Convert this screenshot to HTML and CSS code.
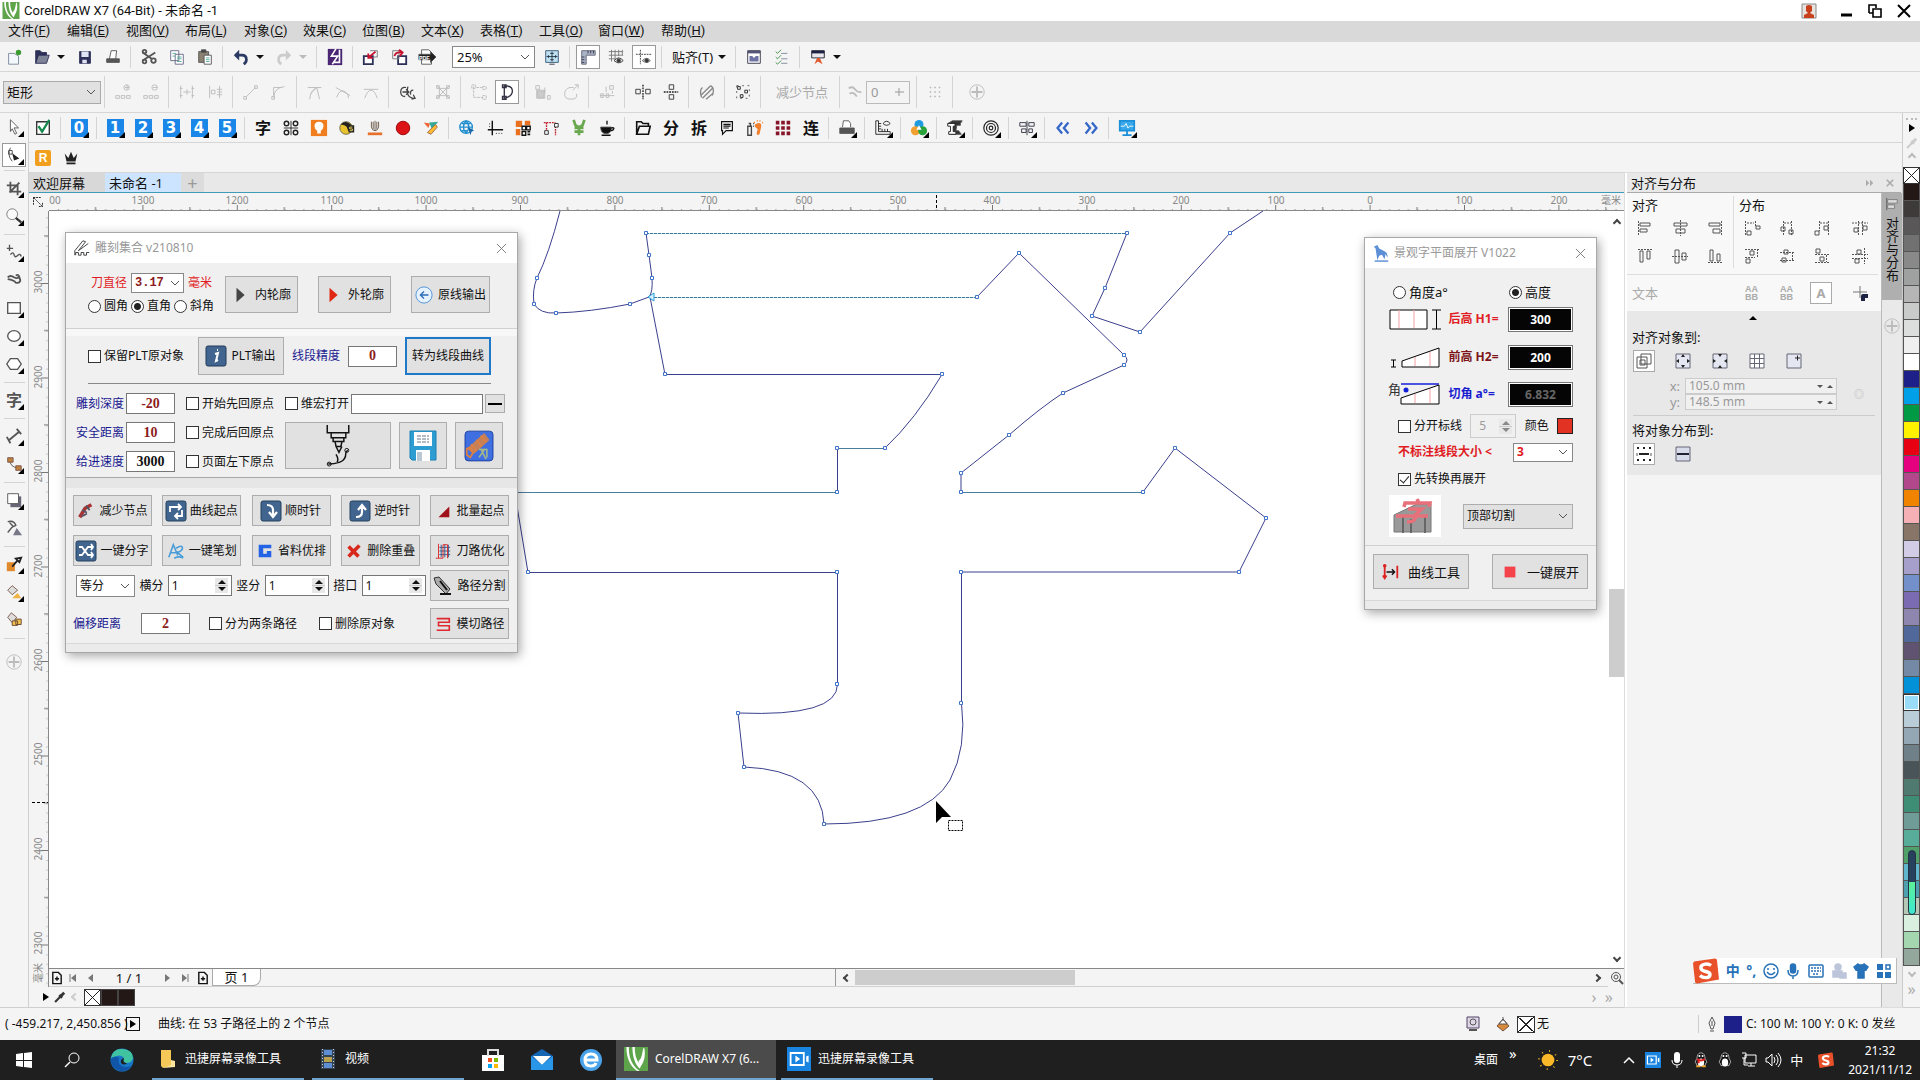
FILE: index.html
```html
<!DOCTYPE html>
<html lang="zh-CN">
<head>
<meta charset="utf-8">
<title>CorelDRAW X7 (64-Bit) - 未命名 -1</title>
<link rel="stylesheet" href="styles.css">
</head>
<body>
<svg class="sprite" aria-hidden="true">
  <symbol id="corel" viewBox="0 0 20 20"><path fill="#5da44a" stroke="none" d="M0 0h20v20H0z"/><path fill="#fff" stroke="none" d="M2 0c0 9 3 16 9 20h2C6 15 4 8 4 0zM7 0c0 8 2 14 6 18 1-1 1-2 1-3C10 11 9 6 9 0zM16 1c-1 5-1 8-4 11l2 4c3-4 4-9 3-15z"/></symbol>
  <symbol id="plus-circle" viewBox="0 0 20 20"><circle cx="10" cy="10" r="8"/><path d="M10 4v12M4 10h12" stroke-width="2"/></symbol>
  <symbol id="sogou" viewBox="0 0 26 26"><path fill="#e8512a" stroke="none" d="M1 4 22 1q2 0 2 2l2 19-22 4q-2 0-2-2L0 6z"/><path d="M18 8c-4-3-11-1-10 3s9 2 9 6-7 4-10 1" stroke="#fff" stroke-width="3.4"/></symbol>
  <symbol id="rec" viewBox="0 0 20 20"><path fill="#1a85e0" stroke="none" d="M0 0h20v20H0z"/><path d="M3 5h11v10H3z" stroke="#fff" stroke-width="1.5"/><path fill="#fff" stroke="none" d="m7 7 4 3-4 3zM16 8l2-1v6l-2-1z"/></symbol>
  <symbol id="dropper" viewBox="0 0 20 20"><path d="m3 17 8-8" stroke-width="3"/><path d="m9 7 4 4m-1-3 4-4" stroke-width="4"/></symbol>
  <symbol id="page-add" viewBox="0 0 20 20"><path d="M4 2h8l4 4v12H4zM7 11h6M10 8v6" stroke="#111" stroke-width="2"/></symbol>
  <symbol id="penguin" viewBox="0 0 20 20"><path fill="#111" stroke="#ccc" d="M10 1c-4 0-5 4-5 7-2 3-3 6-1 6l1 3h10l1-3c2 0 1-3-1-6 0-3-1-7-5-7z"/><ellipse cx="10" cy="13" rx="4" ry="5" fill="#fff" stroke="none"/><circle cx="8" cy="5" r="1.3" fill="#fff" stroke="none"/><circle cx="12" cy="5" r="1.3" fill="#fff" stroke="none"/></symbol>
</svg>

<header class="titlebar">
  <svg class="i20"><use href="#corel"/></svg>
  <h1>CorelDRAW X7 (64-Bit) - 未命名 -1</h1>
  <div class="winctl">
    <button aria-label="用户"><svg viewBox="0 0 16 16" class="i16"><path fill="#e8e2de" stroke="#888" d="M1 1h14v14H1z"/><path fill="#c8401c" stroke="none" d="M5 3q3-2 6 0v5l-2 2 4 2v3H3v-3l4-2-2-2z"/></svg></button>
    <button aria-label="最小化"><svg viewBox="0 0 16 16" class="i16"><path d="M3 12h11" stroke="#000" stroke-width="3"/></svg></button>
    <button aria-label="还原"><svg viewBox="0 0 16 16" class="i16"><path d="M2 10V2h7v3M6 6h8v8H6zM2 10h4" stroke="#000" stroke-width="1.6"/></svg></button>
    <button aria-label="关闭"><svg viewBox="0 0 16 16" class="i16"><path d="m2 2 12 12M14 2 2 14" stroke="#000" stroke-width="2"/></svg></button>
  </div>
</header>

<nav class="menubar">
  <a href="#">文件(<u>F</u>)</a><a href="#">编辑(<u>E</u>)</a><a href="#">视图(<u>V</u>)</a><a href="#">布局(<u>L</u>)</a><a href="#">对象(<u>C</u>)</a><a href="#">效果(<u>C</u>)</a><a href="#">位图(<u>B</u>)</a><a href="#">文本(<u>X</u>)</a><a href="#">表格(<u>T</u>)</a><a href="#">工具(<u>O</u>)</a><a href="#">窗口(<u>W</u>)</a><a href="#">帮助(<u>H</u>)</a>
</nav>

<div class="bar bar-std">
  <button class="tb" aria-label="新建"><svg viewBox="0 0 20 20"><path d="M4 6h6l5 3v9H4z" fill="#f4f8fc" stroke="#789"/><circle cx="15" cy="5" r="3" fill="#3b9c31" stroke="none"/></svg></button>
  <button class="tb" aria-label="打开"><svg viewBox="0 0 20 20"><path d="M3 17V3h5l2 2h5v3" fill="#2c2f57" stroke="#2c2f57"/><path d="m3 17 3-9h12l-3 9z" fill="#7f8396" stroke="#2c2f57"/></svg></button>
  <i class="caret"></i>
  <button class="tb" aria-label="保存"><svg viewBox="0 0 20 20"><path d="M4 4h12v13H4z" fill="#2c2f57" stroke="#2c2f57"/><path d="M6 4h8v6H6zM7 13h5v4H7z" fill="#dfe3f2" stroke="none"/></svg></button>
  <button class="tb" aria-label="打印"><svg viewBox="0 0 20 20"><path d="M6 12 8 3h6l-1 9" fill="#fff"/><path d="M3 12h14v4H3z" fill="#555"/></svg></button>
  <i class="sep"></i>
  <button class="tb" aria-label="剪切"><svg viewBox="0 0 20 20"><path d="m3 5 10 7M3 14 17 5" stroke-width="2"/><circle cx="15" cy="14" r="2.5" stroke-width="2"/><circle cx="5" cy="15" r="2" stroke-width="2"/><circle cx="5" cy="4" r="2" stroke-width="2"/></svg></button>
  <button class="tb" aria-label="复制"><svg viewBox="0 0 20 20"><path d="M3 3h9v11H3zM8 7h9v11H8z" fill="#fff" stroke="#668"/><path d="M5 6h4M5 9h3M10 10h5M10 12h5M10 15h5" stroke="#5a9"/></svg></button>
  <button class="tb" aria-label="粘贴"><svg viewBox="0 0 20 20"><path d="M3 4h11v12H3z" fill="#8a8172" stroke="#555"/><path d="M6 2h5v3H6z" fill="#444"/><path d="M9 8h8v10H9z" fill="#fff"/><path d="M11 11h4M11 13h4M11 15h4" stroke="#5a9"/></svg></button>
  <i class="sep"></i>
  <button class="tb" aria-label="撤消"><svg viewBox="0 0 20 20"><path d="M4 8h7q5 0 5 5 0 3-3 5" stroke="#2c3a63" stroke-width="3"/><path d="m2 8 6-6v12z" fill="#2c3a63" stroke="none"/></svg></button>
  <i class="caret"></i>
  <button class="tb" aria-label="重做"><svg viewBox="0 0 20 20"><path d="M16 8H9q-5 0-5 5 0 3 3 5" stroke="#ccc" stroke-width="3"/><path d="m18 8-6-6v12z" fill="#ccc" stroke="none"/></svg></button>
  <i class="caret dim"></i>
  <i class="sep"></i>
  <button class="tb" aria-label="搜索内容"><svg viewBox="0 0 20 20"><path d="M2 1h16v18H2z" fill="#4b2675" stroke="none"/><path d="M11 1 6 9h7l-6 9M15 2v14H9" stroke="#fff" stroke-width="1.800"/></svg></button>
  <i class="sep"></i>
  <button class="tb" aria-label="导入"><svg viewBox="0 0 20 20"><path d="M2 9h10v9H2z" fill="#fff" stroke="#2c2f57" stroke-width="2"/><path d="M9 3h8v7h-4" stroke="#777"/><path d="M15 4 8 10M7 6v5h5" stroke="#c8102e" stroke-width="2"/></svg></button>
  <button class="tb" aria-label="导出"><svg viewBox="0 0 20 20"><path d="M9 9h9v9H9z" fill="#fff" stroke="#2c2f57" stroke-width="2"/><path d="M3 3h7v9H3z" stroke="#777"/><path d="M5 9q1-5 8-4m-3-3 4 3-3 4" stroke="#c8102e" stroke-width="2"/></svg></button>
  <button class="tb" aria-label="发布为PDF"><svg viewBox="0 0 20 20"><path d="M4 2h8l3 3v13H4z" fill="#fff"/><path d="M1 7h13V4l6 6-6 6v-3H1z" fill="#222"/><text x="1" y="13" class="tiny">PDF</text></svg></button>
  <label class="zoomlevel"><select aria-label="缩放级别"><option>25%</option></select></label>
  <button class="tb" aria-label="全屏预览"><svg viewBox="0 0 20 20"><path d="M3 3h14v13H3z" fill="#bfe0ee" stroke="#357"/><path d="M10 4v11M4 9.500h12M8 6h4M8 13h4M6 8v3M14 8v3M7 18h6" stroke="#234"/></svg></button>
  <i class="sep"></i>
  <button class="tb on" aria-label="显示标尺"><svg viewBox="0 0 20 20"><path d="M3 18V3h15v5H8v10z" fill="#a9b3c6" stroke="#667"/><path d="M10 3v3M13 3v3M16 3v3M3 10h3M3 13h3M3 16h3" stroke="#334"/></svg></button>
  <button class="tb" aria-label="显示网格"><svg viewBox="0 0 20 20"><path d="M2 4h16M2 8h16M2 12h7M5 2v13M9 2v13M13 2v7M17 2v6" stroke="#777"/><path d="M8 14q5-6 10 0-5 5-10 0z" fill="#eee" stroke="#333"/><circle cx="13" cy="14" r="2" fill="#333"/></svg></button>
  <button class="tb on" aria-label="显示辅助线"><svg viewBox="0 0 20 20"><path d="M1 7h18M6 2v16" stroke-dasharray="2 1" stroke="#333"/><path d="M8 14q5-5 9 0-4 4-9 0z" stroke="#666" fill="#ddd"/><circle cx="13" cy="14" r="2" fill="#333"/></svg></button>
  <i class="sep"></i>
  <button class="textbtn">贴齐(T)</button>
  <i class="caret"></i>
  <i class="sep"></i>
  <button class="tb" aria-label="欢迎屏幕"><svg viewBox="0 0 20 20"><path d="M3 3h14v14H3z" fill="#fff" stroke="#334"/><path d="M3 3h14v3H3z" fill="#557" stroke="none"/><path d="M5 9h3l2 2 2-2h3v6H5z" fill="#6d74a5" stroke="none"/></svg></button>
  <button class="tb" aria-label="选项"><svg viewBox="0 0 20 20"><path d="m3 4 2 2 4-4M3 10l2 2 4-4M3 16l2 2 4-4" stroke="#3a8a3a"/><path d="M9 6h7M9 12h7M9 17h7" stroke="#7a8a9a"/></svg></button>
  <i class="sep"></i>
  <button class="tb" aria-label="应用程序启动器"><svg viewBox="0 0 20 20"><path d="M3 3h14v8H3z" fill="#e8e8ee" stroke="#223"/><path d="M3 3h14v3H3z" fill="#1d2144" stroke="none"/><path d="m6 18 3-7h3l3 7-5-3z" fill="#e2572b" stroke="none"/></svg></button>
  <i class="caret"></i>
</div>

<div class="bar bar-prop">
  <label class="shape"><select aria-label="选取范围模式"><option>矩形</option></select></label>
  <i class="sep"></i>
  <button class="tb off" aria-label="添加节点"><svg viewBox="0 0 20 20"><path d="M2 14h4v3H2zM8 14h4v3H8zM14 14h4v3h-4zM12 5h5M14.500 2v5"/><circle cx="14" cy="5" r="3"/></svg></button>
  <button class="tb off" aria-label="删除节点"><svg viewBox="0 0 20 20"><path d="M2 14h4v3H2zM8 14h4v3H8zM14 14h4v3h-4zM12 5h5"/><circle cx="14" cy="5" r="3"/></svg></button>
  <i class="sep"></i>
  <button class="tb off" aria-label="连接节点"><svg viewBox="0 0 20 20"><path d="M3 3v14M16 3v14M6 10h8M10 7v6M2 6h3M2 14h3M15 6h3M15 14h3"/></svg></button>
  <button class="tb off" aria-label="断开曲线"><svg viewBox="0 0 20 20"><path d="M4 3v14M15 3v14M6 8h4v4H6zM13 10h5M12 7h6M12 13h6"/></svg></button>
  <i class="sep"></i>
  <button class="tb off" aria-label="转换为线条"><svg viewBox="0 0 20 20"><path d="M5 15 15 5M2 15h3v3H2zM14 3h3v3h-3z"/></svg></button>
  <button class="tb off" aria-label="转换为曲线"><svg viewBox="0 0 20 20"><path d="M4 16Q5 5 16 4M2 15h3v3H2zM4 15V5h9"/></svg></button>
  <i class="sep"></i>
  <button class="tb off" aria-label="尖突节点"><svg viewBox="0 0 20 20"><path d="M4 18Q5 8 12 5l3 13M2 5h15M12 5 5 12"/></svg></button>
  <button class="tb off" aria-label="平滑节点"><svg viewBox="0 0 20 20"><path d="M2 5l16 9M3 16q3-9 8-7 5 2 5 8"/></svg></button>
  <button class="tb off" aria-label="对称节点"><svg viewBox="0 0 20 20"><path d="M2 7h16M3 17q3-9 7-9t7 9"/></svg></button>
  <i class="sep"></i>
  <button class="tb" aria-label="反转方向"><svg viewBox="0 0 20 20"><path d="M9 5Q3 4 3 10q0 5 5 5M5 10h6M9 7l3 3-3 3M11 4q-3 12 7 13m-1-9q-4 0-3 5m1 5 4-1-2-4" stroke-width="1.4" stroke="#444"/></svg></button>
  <i class="sep"></i>
  <button class="tb off" aria-label="提取子路径"><svg viewBox="0 0 20 20"><path d="M3 3l14 14M17 3 3 17M6 6h8v8H6zM3 3h3v3H3zM14 3h3v3h-3zM3 14h3v3H3zM14 14h3v3h-3z"/></svg></button>
  <i class="sep"></i>
  <button class="tb off" aria-label="延长曲线使之闭合"><svg viewBox="0 0 20 20"><path d="M4 4v12h10M2 2h4v4H2zM14 14h4v4h-4zM14 4h4v3h-4zM7 5h6" stroke-dasharray="3 1"/></svg></button>
  <button class="tb on" aria-label="闭合曲线"><svg viewBox="0 0 20 20"><path d="M7 3q9 0 9 6t-9 8M7 3v14M5 2h4v3H5zM5 15h4v3H5z" stroke="#334" stroke-width="1.500"/></svg></button>
  <i class="sep"></i>
  <button class="tb off" aria-label="延展与缩放节点"><svg viewBox="0 0 20 20"><path d="M3 8h9v9H3zM2 3h4v4H2zM15 14h3v4h-3zM12 5v6"/><path d="M4 9h7v7H4z" fill="#ccc"/></svg></button>
  <button class="tb off" aria-label="旋转与倾斜节点"><svg viewBox="0 0 20 20"><path d="M13 5q-9-1-10 6t7 7 6-6M12 8l6-6m-4 0h4v4"/></svg></button>
  <i class="sep"></i>
  <button class="tb off" aria-label="对齐节点"><svg viewBox="0 0 20 20"><path d="M2 14h16M3 12h3v4H3zM9 12h3v4H9zM13 3h4v4h-4zM9 4v6M16 9v3"/></svg></button>
  <i class="sep"></i>
  <button class="tb" aria-label="水平反射节点"><svg viewBox="0 0 20 20"><path d="M10 2v16" stroke-dasharray="2 1" stroke-width="2"/><path d="M2 7h5v5H2zM13 7h5v5h-5z" stroke="#333"/></svg></button>
  <button class="tb" aria-label="垂直反射节点"><svg viewBox="0 0 20 20"><path d="M2 10h16" stroke-dasharray="2 1" stroke-width="2"/><path d="M8 2h5v5H8zM8 13h5v5H8z" stroke="#333"/></svg></button>
  <i class="sep"></i>
  <button class="tb off" aria-label="弹性模式"><svg viewBox="0 0 20 20"><path d="M3 14 14 3M5 17 17 5M9 18l8-7M5 5q-4 3-1 11M14 3q5 3 2 11" stroke="#888" stroke-width="1.500"/></svg></button>
  <i class="sep"></i>
  <button class="tb" aria-label="选择所有节点"><svg viewBox="0 0 20 20"><path d="M3 3h14v14H3z" stroke-dasharray="2 4" stroke="#555"/><path d="M4 4h3v3H4zM12 8h3v3h-3zM7 13h3v3H7z" stroke="#222"/></svg></button>
  <i class="sep"></i>
  <button class="textbtn dimtext">减少节点</button>
  <i class="sep"></i>
  <span class="tb off narrow"><svg viewBox="0 0 20 20"><path d="M3 6q4-3 7 1t7 3M4 12q4-3 8 3" stroke-width="2"/></svg></span>
  <label class="smooth"><input value="0" aria-label="曲线平滑度" disabled><svg viewBox="0 0 12 12"><path d="M2 6h9M6 2v8"/></svg></label>
  <i class="sep"></i>
  <button class="tb off" aria-label="边框"><svg viewBox="0 0 20 20"><path d="M4 5h12M4 10h12M4 15h12M5 4v12M10 4v12M15 4v12" stroke-dasharray="2 3"/></svg></button>
  <i class="sep"></i>
  <button class="tb wide off" aria-label="自定义"><svg><use href="#plus-circle"/></svg></button>
</div>

<div class="workspace">
  <aside class="toolbox">
    <button class="tb fly" aria-label="选择"><svg viewBox="0 0 20 20"><path d="m6 2 9 9-5 0 3 6-2 1-3-6-2 3z" fill="#fff" stroke="#555"/></svg></button>
    <button class="tb fly on" aria-label="形状"><svg viewBox="0 0 20 20"><path d="M6 2q-4 8 2 15M4 5h4v4H4z" stroke="#444"/><path d="m8 8 8 6-6 2z" fill="#222" stroke="none"/></svg></button>
    <i class="hsep"></i>
    <button class="tb fly" aria-label="裁剪"><svg viewBox="0 0 20 20"><path d="M6 3v11h12M2 7h12v11M5 15 16 4" stroke-width="2"/></svg></button>
    <button class="tb fly" aria-label="缩放"><svg viewBox="0 0 20 20"><circle cx="8" cy="8" r="6" fill="#fafafa" stroke="#777"/><path d="m12 12 6 5" stroke="#333" stroke-width="2.500"/></svg></button>
    <i class="hsep"></i>
    <button class="tb fly" aria-label="手绘"><svg viewBox="0 0 20 20"><path d="M2 6h7M5 2v7M6 13q3-4 4 0t4 1 4 1" stroke-width="1.500"/></svg></button>
    <button class="tb" aria-label="艺术笔"><svg viewBox="0 0 20 20"><path d="M3 7q3-3 7 0 3 2 6 0-1-4-4-2M3 9q7 1 9 4 4 1 5-2 0-4-3-5" stroke-width="2"/></svg></button>
    <button class="tb fly" aria-label="矩形"><svg viewBox="0 0 20 20"><path d="M3 4h14v12H3z" fill="#fff" stroke-width="1.500"/></svg></button>
    <button class="tb fly" aria-label="椭圆形"><svg viewBox="0 0 20 20"><ellipse cx="10" cy="10" rx="7" ry="6" fill="#fff" stroke-width="1.500"/></svg></button>
    <button class="tb fly" aria-label="多边形"><svg viewBox="0 0 20 20"><path d="m6 4h8l4 6-4 6H6l-4-6z" fill="#fff" stroke-width="1.500"/></svg></button>
    <i class="hsep"></i>
    <button class="tb fly glyph grey" aria-label="文本">字</button>
    <i class="hsep"></i>
    <button class="tb fly" aria-label="平行度量"><svg viewBox="0 0 20 20"><path d="M4 15 16 5M2 11l4 7M13 2l5 6" stroke-width="2"/></svg></button>
    <button class="tb fly" aria-label="直线连接器"><svg viewBox="0 0 20 20"><path d="M5 5q1 9 9 9"/><path d="M3 3h6v5H3zM12 12h6v5h-6z" fill="#c1803f" stroke="#754"/></svg></button>
    <i class="hsep"></i>
    <button class="tb fly" aria-label="阴影"><svg viewBox="0 0 20 20"><path d="M6 6h12v12H6z" fill="#667" stroke="none"/><path d="M3 3h12v11H3z" fill="#fff"/></svg></button>
    <button class="tb" aria-label="透明度"><svg viewBox="0 0 20 20"><path d="M3 3q7-2 9 4l-4 2-5 6M5 4l4 4" stroke-width="1.500"/><path d="m9 18 4-8 6 8z" fill="#778" stroke="none"/></svg></button>
    <i class="hsep"></i>
    <button class="tb fly" aria-label="颜色滴管"><svg viewBox="0 0 20 20"><path d="M2 8h9v10H2z" fill="#e08a2c" stroke="none"/><path d="m8 13 6-7M12 4l4 4 2-5z" stroke="#222" stroke-width="2"/></svg></button>
    <button class="tb fly" aria-label="交互式填充"><svg viewBox="0 0 20 20"><path d="m8 3 6 5-6 5-5-5z" fill="#ddd" stroke="#754"/><path d="m8 17 6-6 4 6z" fill="#f0b343" stroke="none"/></svg></button>
    <button class="tb" aria-label="智能填充"><svg viewBox="0 0 20 20"><path d="m7 2 6 5-5 6-5-6z" fill="#ddd" stroke="#754"/><path d="M8 11h6v5H8zM12 9h6v6h-6z" fill="#f3c14d" stroke="#643"/></svg></button>
    <i class="hsep"></i>
    <button class="tb grow off" aria-label="自定义工具箱"><svg><use href="#plus-circle"/></svg></button>
  </aside>

  <div class="center">
    <div class="bar bar-plug">
      <button class="tb" aria-label="确认"><svg viewBox="0 0 20 20"><path d="M3 3h14v14H3z" fill="#fff" stroke="#333" stroke-width="1.500"/><path d="m5 8 4 6 8-13" stroke="#12884c" stroke-width="2.500"/></svg></button>
      <i class="sep"></i>
      <button class="tb fly num"><b>0</b></button><i class="sep"></i>
      <button class="tb fly num"><b>1</b></button><button class="tb fly num"><b>2</b></button><button class="tb fly num"><b>3</b></button><button class="tb fly num"><b>4</b></button><button class="tb fly num"><b>5</b></button>
      <i class="sep"></i>
      <button class="tb glyph">字</button>
      <button class="tb" aria-label="阵列"><svg viewBox="0 0 20 20"><path d="M10 2v16M2 10h16" stroke="#222"/><g stroke="#222" stroke-width="1.600"><circle cx="5" cy="5" r="2.500"/><circle cx="15" cy="5" r="2.500"/><circle cx="5" cy="15" r="2.500"/><circle cx="15" cy="15" r="2.500"/></g></svg></button>
      <button class="tb" aria-label="灯泡"><svg viewBox="0 0 20 20"><path d="M1 1h18v18H1z" fill="#f07d1e" stroke="none"/><path d="M10 3q5 0 5 5 0 3-3 5v3H8v-3q-3-2-3-5 0-5 5-5z" fill="#fff" stroke="none"/></svg></button>
      <button class="tb" aria-label="描图"><svg viewBox="0 0 20 20"><circle cx="9" cy="10" r="7" fill="#e9c32e" stroke="#665"/><path d="M3 6q6-6 12 1l-3 3-5-3z" fill="#222" stroke="none"/><path d="M9 7h9v8h-6z" fill="#222" stroke="none"/><path d="M16 9h-3v2h3v2h-3" stroke="#f0d860"/></svg></button>
      <button class="tb" aria-label="灯箱"><svg viewBox="0 0 20 20"><path d="M6 3v6q1 4 4 4t4-4V3M10 2v11M8 3v8M12 3v8" stroke="#654"/><path d="M2 15h16v3H2z" fill="#e8712a" stroke="none"/></svg></button>
      <button class="tb" aria-label="红印"><svg viewBox="0 0 20 20"><circle cx="10" cy="10" r="7.500" fill="#dc1418" stroke="#900"/></svg></button>
      <button class="tb" aria-label="彩带"><svg viewBox="0 0 20 20"><path d="m2 4 7 1-2 5z" fill="#e63" stroke="none"/><path d="m8 4 10-1-7 8z" fill="#3a9" stroke="none"/><path d="m6 15 9-9 2 3-7 8z" fill="#fb3" stroke="#964"/></svg></button>
      <i class="sep"></i>
      <button class="tb" aria-label="网页"><svg viewBox="0 0 20 20"><g stroke="#1f8fd0" stroke-width="1.500"><circle cx="9" cy="9" r="7"/><path d="M2 9h14M9 2q-6 7 0 14M9 2q6 7 0 14M4 5h10M4 13h7"/></g><path d="m11 9 7 4-3 1-1 4z" fill="#1768a8" stroke="none"/></svg></button>
      <button class="tb" aria-label="原点"><svg viewBox="0 0 20 20"><path d="M7 2v16M2 12h17" stroke="#111" stroke-width="1.600"/><path d="M11 16h7M4 5v4" stroke-dasharray="1 2" stroke="#111"/></svg></button>
      <button class="tb" aria-label="二维码"><svg viewBox="0 0 20 20"><path d="M2 2h7v7H2zM2 11h5v7H2zM12 2h6v5h-6z" fill="#e8701e" stroke="none"/><path d="M9 8h4v4H9zM14 8h4v4h-4zM9 14h4v4H9z" fill="#fff" stroke="#111" stroke-width="1.500"/><path d="M15 14h3M15 17h3" stroke="#111" stroke-width="2"/></svg></button>
      <button class="tb" aria-label="矩形标注"><svg viewBox="0 0 20 20"><path d="M2 4h13M5 4v8M15 8v10" stroke="#c0202c" stroke-width="1.500" stroke-dasharray="2 1"/><path d="M3 13h4v4H3zM14 5h4v4h-4z" fill="#fff" stroke="#222"/></svg></button>
      <button class="tb" aria-label="报价"><svg viewBox="0 0 20 20"><path d="m4 1 2 6 4 2 4-2 2-6M5 10h10M5 14h10M10 8v10" stroke="#6aa84f" stroke-width="3"/></svg></button>
      <button class="tb" aria-label="休息"><svg viewBox="0 0 20 20"><path d="M3 9h12q0 6-4 7H7Q3 15 3 9z" fill="#111"/><path d="M15 10q4-1 2 2-1 1-3 1M10 2v4M4 18h10" stroke="#111" stroke-width="1.500"/></svg></button>
      <i class="sep"></i>
      <button class="tb" aria-label="文件夹"><svg viewBox="0 0 20 20"><path d="M3 17V3h5l2 2h6v3M3 17l3-9h12l-2 9z" stroke="#111" stroke-width="1.800"/></svg></button>
      <button class="tb glyph">分</button><button class="tb glyph">拆</button>
      <button class="tb" aria-label="备注"><svg viewBox="0 0 20 20"><path d="M4 3h12v10H9l-4 4v-4H4zM6 6h8M6 8h8M6 10h6" stroke="#111" stroke-width="1.300"/></svg></button>
      <button class="tb" aria-label="喷涂"><svg viewBox="0 0 20 20"><path d="M2 8h4v10H2zM3 5h2v3M8 5h1M8 8h1" stroke="#444" stroke-width="1.500"/><path d="M10 6q7-4 7 2l-2 9q-4 2-3-2l1-4q-4-2-3-5z" fill="#f0802c" stroke="none"/><path d="M9 4h1M12 2h1M15 2h1M18 4h1" stroke="#f0802c" stroke-width="2"/></svg></button>
      <button class="tb" aria-label="点阵"><svg viewBox="0 0 20 20"><path d="M2 4h16M2 10h16M2 16h16" stroke="#861528" stroke-width="4" stroke-dasharray="4 2"/></svg></button>
      <button class="tb glyph">连</button>
      <i class="sep"></i>
      <button class="tb fly" aria-label="打印工具"><svg viewBox="0 0 20 20"><path d="M5 9 6 2h6l2 3v4" fill="#fff"/><path d="M2 10h16v6H2z" fill="#555"/></svg></button><i class="sep"></i>
      <button class="tb fly" aria-label="标尺工具"><svg viewBox="0 0 20 20"><path d="M2 2h3v12h13v3H2zM5 5h3M5 8h3M5 11h3M9 14v-3M12 14v-3M15 14v-3M10 5q4-5 8 0-4 4-8 0z" stroke="#222"/></svg></button><i class="sep"></i>
      <button class="tb fly" aria-label="颜色工具"><svg viewBox="0 0 20 20"><circle cx="10" cy="6" r="5" fill="#1f9be0" stroke="none"/><circle cx="6" cy="13" r="5" fill="#f0a030" stroke="none"/><circle cx="14" cy="13" r="5" fill="#2aa23c" stroke="none"/><path d="m10 7 3 5h-6z" fill="#fff" stroke="none"/></svg></button><i class="sep"></i>
      <button class="tb fly" aria-label="立体工具"><svg viewBox="0 0 20 20"><path d="m2 5 5-3h11l-2 3v2h-4l-1 6h3l3 4H4l2-3V7H2z" fill="#333"/><path d="M2 5h8v3H8v6h3v3H3v-3h2V8H2z" fill="#fff" stroke="#222"/></svg></button><i class="sep"></i>
      <button class="tb fly" aria-label="螺纹工具"><svg viewBox="0 0 20 20"><g stroke="#222" stroke-width="1.300"><circle cx="10" cy="10" r="8"/><circle cx="10" cy="10" r="5"/><circle cx="10" cy="10" r="2"/></g></svg></button><i class="sep"></i>
      <button class="tb fly" aria-label="对齐工具"><svg viewBox="0 0 20 20"><path d="M2 4h7v4H2zM12 4h6v4h-6zM4 11h5v4H4zM12 11h4v4h-4zM10 2v16" stroke="#334"/></svg></button><i class="sep"></i>
      <button class="tb" aria-label="上一组"><svg viewBox="0 0 20 20"><path d="m9 4-5 6 5 6M16 4l-5 6 5 6" stroke="#3568c8" stroke-width="2.600"/></svg></button>
      <button class="tb" aria-label="下一组"><svg viewBox="0 0 20 20"><path d="m4 4 5 6-5 6M11 4l5 6-5 6" stroke="#3568c8" stroke-width="2.600"/></svg></button>
      <i class="sep"></i>
      <button class="tb fly" aria-label="监视"><svg viewBox="0 0 20 20"><path d="M2 2h16v11H2zM10 13v4M5 18h10" fill="#39a9ec" stroke="#1b8fd8" stroke-width="2"/><path d="M3 8h4l2-3 2 5 2-2h4" stroke="#fff"/></svg></button>
    </div>
    <div class="bar bar-plug">
      <button class="tb" aria-label="注册"><span class="rbadge">R</span></button>
      <button class="tb" aria-label="会员"><svg viewBox="0 0 20 20"><path d="m3 5 4 5 3-7 3 7 4-5-2 9H5z" fill="#222" stroke="none"/><path d="M5 16h10" stroke="#222" stroke-width="2"/></svg></button>
    </div>

    <div class="split">
      <main class="doc">
        <div class="tabs"><button>欢迎屏幕</button><button class="cur">未命名 -1</button><button class="add" aria-label="新建标签">+</button></div>
        <div class="corner"><svg viewBox="0 0 20 20"><path d="M5 5h9M5 5v9M5 5l10 10m0-4v4h-4" stroke="#111" stroke-dasharray="2 1"/></svg></div>
        <svg class="hruler">
          <defs>
            <pattern id="ht" x="-1" width="94.4" height="18" patternUnits="userSpaceOnUse"><path d="M.5 12v6M47.500 14v4" stroke="#777"/><path d="M10 16.500h80" stroke="#999" stroke-dasharray="1 8.440"/></pattern>
          </defs>
          <rect width="100%" height="18" fill="url(#ht)" stroke="none"/>
          <g class="rl"><text x="6" y="11">00</text><text x="94" y="11">1300</text><text x="188" y="11">1200</text><text x="283" y="11">1100</text><text x="377" y="11">1000</text><text x="471" y="11">900</text><text x="566" y="11">800</text><text x="660" y="11">700</text><text x="755" y="11">600</text><text x="849" y="11">500</text><text x="943" y="11">400</text><text x="1038" y="11">300</text><text x="1132" y="11">200</text><text x="1227" y="11">100</text><text x="1321" y="11">0</text><text x="1415" y="11">100</text><text x="1510" y="11">200</text><text x="1562" y="11">毫米</text></g>
          <path d="M887.500 2v15" stroke="#000" stroke-dasharray="3 2"/>
        </svg>
        <svg class="vruler">
          <defs>
            <pattern id="vt" y="72" width="20" height="94.5" patternUnits="userSpaceOnUse"><path d="M12 .5h8M15 47.500h5" stroke="#777"/><path d="M18 10v80" stroke="#999" stroke-dasharray="1 8.450"/></pattern>
          </defs>
          <rect width="20" height="100%" fill="url(#vt)" stroke="none"/>
          <g class="rl"><text transform="translate(13 71) rotate(-90)">3000</text><text transform="translate(13 166) rotate(-90)">2900</text><text transform="translate(13 260) rotate(-90)">2800</text><text transform="translate(13 355) rotate(-90)">2700</text><text transform="translate(13 449) rotate(-90)">2600</text><text transform="translate(13 543) rotate(-90)">2500</text><text transform="translate(13 638) rotate(-90)">2400</text><text transform="translate(13 732) rotate(-90)">2300</text><text transform="translate(13 762) rotate(-90)">毫米</text></g>
          <path d="M3 591.500h16" stroke="#000" stroke-dasharray="3 2"/>
        </svg>

        <div class="canvas">
          <svg class="drawing">
            <g transform="translate(-49 -211)">
              <g stroke="#3c3f8c">
                <path d="M560 211Q549 254 537 278 532 290 534 304 540 314 556 313 590 312 630 304L649 297Q653 292 652 278L649 255 646 233M1127 233 1105 288 1092 316 1140 332 1230 233 1263 211"/>
                <path d="M977 297 1019 253 1124 355Q1130 360 1124 365L1063 393Q1040 408 1009 435L961 473V492M1143 492 1175 448 1266 518 1239 572H961.500V703Q967 748 950 780 925 824 824 824 822 770 744 767L738 713Q838 717 837.500 684V572.500H528L517 506M837.500 492V448M885 448Q915 420 942 374.500H665L650 297"/>
              </g>
              <path d="M517 492.500H837M837 448.500h48M961 492.500h182" stroke="#4a7f9c"/>
              <path d="M646 233.500h481M650 297.500h327" stroke="#b7dfe6"/>
              <path d="M646 233.500h481M650 297.500h327" stroke="#3a7895" stroke-dasharray="3 1"/>
              <path d="m648 297 6-4v8z" fill="#d3f0ff" stroke="#2a9ad8"/>
              <path class="nodes" d="M535.500 276.500h3v3h-3zM532.500 302.500h3v3h-3zM554.500 311.500h3v3h-3zM628.500 302.500h3v3h-3zM650.500 276.500h3v3h-3zM647.500 253.500h3v3h-3zM644.500 231.500h3v3h-3zM1125.500 231.500h3v3h-3zM1103.500 286.500h3v3h-3zM1090.500 314.500h3v3h-3zM1138.500 330.500h3v3h-3zM1228.500 231.500h3v3h-3zM975.500 295.500h3v3h-3zM1017.500 251.500h3v3h-3zM1122.500 353.500h3v3h-3zM1122.500 363.500h3v3h-3zM1061.500 391.500h3v3h-3zM1007.500 433.500h3v3h-3zM959.500 471.500h3v3h-3zM959.500 490.500h3v3h-3zM1141.500 490.500h3v3h-3zM1173.500 446.500h3v3h-3zM1264.500 516.500h3v3h-3zM1237.500 570.500h3v3h-3zM959.500 570.500h3v3h-3zM959.500 701.500h3v3h-3zM822.500 822.500h3v3h-3zM742.500 765.500h3v3h-3zM736.500 711.500h3v3h-3zM835.500 682.500h3v3h-3zM835.500 570.500h3v3h-3zM526.500 570.500h3v3h-3zM835.500 490.500h3v3h-3zM835.500 446.500h3v3h-3zM883.500 446.500h3v3h-3zM940.500 372.500h3v3h-3zM663.500 372.500h3v3h-3z"/>
              <path d="m936 801 15 16H942l-6 6z" fill="#000" stroke="none"/>
              <path d="M948.500 820.500h14v10h-14z" stroke="#000" stroke-dasharray="2 1"/>
            </g>
          </svg>

          <form class="dlg carve">
            <div class="dlg-title"><svg viewBox="0 0 20 20" class="i18"><path d="M2 18v-5l9-11 3 1-8 10M6 13l11-8M3 18v-3h3v3h3v-3h3v3h3v-3h3" stroke="#333"/></svg><span>雕刻集合 v210810</span><button type="button" aria-label="关闭"><svg viewBox="0 0 12 12"><path d="m1 1 10 10M11 1 1 11" stroke="#777"/></svg></button></div>
            <div class="sec s1">
              <div class="kn">
                <div class="r"><label for="dia" class="red">刀直径</label><select id="dia" class="mono"><option>3.17</option></select><span class="red">毫米</span></div>
                <div class="r radios"><label><input type="radio" name="cr">圆角</label><label><input type="radio" name="cr" checked>直角</label><label><input type="radio" name="cr">斜角</label></div>
              </div>
              <button type="button" class="b w73"><svg viewBox="0 0 20 20" class="i18"><path d="m5 2 9 8-9 8z" fill="#444" stroke="none"/></svg>内轮廓</button>
              <button type="button" class="b w73"><svg viewBox="0 0 20 20" class="i18"><path d="m5 2 9 8-9 8z" fill="#e02814" stroke="none"/></svg>外轮廓</button>
              <button type="button" class="b w79"><svg viewBox="0 0 20 20" class="i18"><circle cx="10" cy="10" r="9" fill="#e6f3ff" stroke="#4b8fd6"/><path d="M15 10H6m4-4-4 4 4 4" stroke="#2d6eb8" stroke-width="1.500"/></svg>原线输出</button>
            </div>
            <div class="sec s2">
              <div class="r plt">
                <label class="ck"><input type="checkbox">保留PLT原对象</label>
                <button type="button" class="b w86"><svg viewBox="0 0 20 20" class="i20"><rect width="20" height="20" rx="2" fill="#41658e" stroke="#1f3a5c"/><path d="m9 8 3-1-2 8 2-1M11 4h1" stroke="#fff" stroke-width="2"/></svg>PLT输出</button>
                <label for="acc" class="navy">线段精度</label><input id="acc" class="val" value="0">
                <button type="button" class="b w86 focus">转为线段曲线</button>
              </div>
              <hr>
              <div class="params">
                <div class="col">
                  <div class="r"><label for="dep" class="navy">雕刻深度</label><input id="dep" class="val" value="-20"></div>
                  <div class="r"><label for="saf" class="navy">安全距离</label><input id="saf" class="val" value="10"></div>
                  <div class="r"><label for="fed" class="navy">给进速度</label><input id="fed" class="val black" value="3000"></div>
                </div>
                <div class="col">
                  <label class="ck"><input type="checkbox">开始先回原点</label>
                  <label class="ck"><input type="checkbox">完成后回原点</label>
                  <label class="ck"><input type="checkbox">页面左下原点</label>
                </div>
                <div class="col out">
                  <div class="r"><label class="ck"><input type="checkbox">维宏打开</label><input class="path" aria-label="维宏路径"><button type="button" class="b minus" aria-label="清除"><svg viewBox="0 0 14 4"><path d="M0 2h14" stroke="#000" stroke-width="2"/></svg></button></div>
                  <div class="bigs">
                    <button type="button" class="b" aria-label="生成雕刻"><svg viewBox="0 0 30 44" class="spindle"><path d="M4 1v8h22V1M8 9v5h15V9M10 14v4h11v-4M12 18l1 5h5l1-5M13 23l3 6 3-6M25 27q-2 1-2 3 0 7-6 9t-12 2M13 31q3 5 1 8" stroke="#111" stroke-width="1.500"/><circle cx="24" cy="27" r="2" stroke="#111"/><circle cx="6" cy="41" r="2" stroke="#111"/></svg></button>
                    <button type="button" class="b" aria-label="保存"><svg viewBox="0 0 28 32"><path d="M1 1h26v29H3l-2-2z" fill="#2e9ed2" stroke="#1b80b2"/><path d="M5 2h18v14H5zM7 20h14v11H7z" fill="#fff" stroke="none"/><path d="M8 6h12M8 9h12M8 12h12" stroke="#678" stroke-dasharray="4 1"/><path d="M8 22h5v9H8z" fill="#b9c8d2" stroke="none"/></svg></button>
                    <button type="button" class="b" aria-label="拼版"><svg viewBox="0 0 32 34"><rect x="0" y="0" width="32" height="34" rx="4" fill="#3f6fe0" stroke="#173a9c"/><path d="m2 20 20-18 6 8L10 26z" fill="#c58058" stroke="none"/><path d="m2 20 4-1 3 6-3 5-4-3zM7 15l6 8M13 10l6 8M18 5l6 8" stroke="#e08040" stroke-width="2"/><path d="M16 21h9v9M18 20l6 12M16 30l7-10" stroke="#a7b88a" stroke-width="1.800"/></svg></button>
                  </div>
                </div>
              </div>
            </div>
            <div class="sec s3">
              <div class="btn5">
                <button type="button" class="b"><svg viewBox="0 0 20 20" class="i18"><path d="M3 17 9 7l7-4" stroke="#a33" stroke-width="4"/><path d="m6 9 5 3M10 4l4 5M5 16l6-3" stroke="#556" stroke-width="2"/></svg>减少节点</button>
                <button type="button" class="b"><svg viewBox="0 0 20 20" class="i20"><rect width="20" height="20" rx="2" fill="#41658e" stroke="#24405f"/><path d="M4 11V6h11m-3-3 3 3-3 3M16 9v6H9m3-3-3 3 3 3" stroke="#fff" stroke-width="1.800"/></svg>曲线起点</button>
                <button type="button" class="b"><svg viewBox="0 0 20 20" class="i20"><rect width="20" height="20" rx="2" fill="#41658e" stroke="#24405f"/><path d="M6 4q6 0 6 5v6m-4-4 4 5 4-5" stroke="#fff" stroke-width="2.200"/></svg>顺时针</button>
                <button type="button" class="b"><svg viewBox="0 0 20 20" class="i20"><rect width="20" height="20" rx="2" fill="#41658e" stroke="#24405f"/><path d="M6 16q6 0 6-5V5M8 9l4-5 4 5" stroke="#fff" stroke-width="2.200"/></svg>逆时针</button>
                <button type="button" class="b"><svg viewBox="0 0 20 20" class="i18"><path d="M17 5v12H5z" fill="#a01018" stroke="none"/></svg>批量起点</button>
                <button type="button" class="b"><svg viewBox="0 0 20 20" class="i20"><rect width="20" height="20" rx="2" fill="#41658e" stroke="#24405f"/><path d="M3 6h3l6 8h5m-2-3 2 3-2 3M3 14h3l6-8h5m-2-3 2 3-2 3" stroke="#fff" stroke-width="1.800"/></svg>一键分字</button>
                <button type="button" class="b"><svg viewBox="0 0 20 20" class="i18"><path d="m2 17 5-14 5 12M4 12h6M10 7q8-5 7 1-3 4-6 3l7 6M8 18q6-3 10 0" stroke="#4a9ed8" stroke-width="1.800"/></svg>一键笔划</button>
                <button type="button" class="b"><svg viewBox="0 0 20 20" class="i18"><path d="M3 3h14v4H8v6h4v-3h5v7H3z" fill="#2463e6" stroke="none"/></svg>省料优排</button>
                <button type="button" class="b"><svg viewBox="0 0 20 20" class="i18"><path d="m4 5 11 11M16 4 4 16" stroke="#d8281c" stroke-width="4"/></svg>删除重叠</button>
                <button type="button" class="b"><svg viewBox="0 0 20 20" class="i18"><path d="M8 3v14M12 3v14M16 3v14M6 6h12M6 10h12M6 14h12" stroke="#358"/><path d="M5 2v16M2 18h8V3h5v15" stroke="#d22"/></svg>刀路优化</button>
              </div>
              <div class="r line3">
                <select class="eq" aria-label="分割方式"><option>等分</option></select>
                <label for="hx">横分</label><span class="spin"><input id="hx" value="1"><i></i></span>
                <label for="vx">竖分</label><span class="spin"><input id="vx" value="1"><i></i></span>
                <label for="dk">搭口</label><span class="spin"><input id="dk" value="1"><i></i></span>
                <button type="button" class="b"><svg viewBox="0 0 20 20" class="i20"><path d="m1 2 5-1 11 12-4 5L3 8z" fill="#aaa" stroke="#333"/><path d="m7 5 7 9M7 18h11" stroke="#111" stroke-width="2"/></svg>路径分割</button>
              </div>
              <div class="r line4">
                <label for="off" class="navy">偏移距离</label><input id="off" class="val" value="2">
                <label class="ck"><input type="checkbox">分为两条路径</label>
                <label class="ck"><input type="checkbox">删除原对象</label>
                <button type="button" class="b"><svg viewBox="0 0 20 20" class="i18"><path d="M3 4h14v4H5v4h12v5H3" stroke="#e02830" stroke-width="1.800"/></svg>模切路径</button>
              </div>
            </div>
            <div class="foot"></div>
          </form>

          <form class="dlg unfold">
            <div class="dlg-title"><svg viewBox="0 0 20 20" class="i18"><path d="m2 3 4-2 2 4 6 3q4 2 3 7l-2-4-1 6-3-5-3 1-2 5-1-6-1-7z" fill="#5d8fd6" stroke="none"/><path d="M3 19h15" stroke="#7ba3dd" stroke-width="2"/></svg><span>景观字平面展开 V1022</span><button type="button" aria-label="关闭"><svg viewBox="0 0 12 12"><path d="m1 1 10 10M11 1 1 11" stroke="#777"/></svg></button></div>
            <div class="u-body">
              <div class="r modes"><label><input type="radio" name="md">角度a°</label><label><input type="radio" name="md" checked>高度</label></div>
              <div class="r hrow"><svg viewBox="0 0 54 24"><path d="M1 3h37v19H1z" fill="#fff" stroke="#000"/><path d="M10 3v18M25 3v18" stroke="#f3a0a8"/><path d="M43 3h9M43 22h9M47.500 3v19" stroke="#000"/></svg><label for="h1" class="red">后高 H1=</label><input id="h1" value="300"></div>
              <div class="r hrow"><svg viewBox="0 0 54 24"><path d="M13 22v-6L50 3v19z" fill="#fff" stroke="#000"/><path d="M26 12v9M41 7v14" stroke="#f3a0a8"/><path d="M2 15h5M2 22h5M4.500 15v7" stroke="#000"/></svg><label for="h2" class="maroon">前高 H2=</label><input id="h2" value="200"></div>
              <div class="r hrow third"><svg viewBox="0 0 54 24"><path d="M12 22v-6L50 3v19z" fill="#fff" stroke="#000"/><path d="M26 12v9M41 7v14" stroke="#f3a0a8"/><path d="M12 2h38" stroke="#1420d8" stroke-width="1.500"/><circle cx="17" cy="8" r="2.500" fill="#1420d8" stroke="none"/><text x="-1" y="12" class="ang">角</text></svg><label for="h3" class="blue">切角 a°=</label><input id="h3" value="6.832" disabled></div>
              <div class="r mark"><label class="ck"><input type="checkbox">分开标线</label><span class="spin offspin"><input value="5" aria-label="标线数" disabled><i></i></span><span>颜色</span><button type="button" class="sw" aria-label="颜色"></button></div>
              <div class="r small"><label for="sz" class="red">不标注线段大小 &lt;</label><select id="sz"><option>3</option></select></div>
              <div class="r conv"><label class="ck"><input type="checkbox" checked>先转换再展开</label></div>
              <div class="r cutrow"><svg viewBox="0 0 52 42"><path fill="#fff" stroke="none" d="M0 0h52v42H0z"/><path d="M5 20 28 9h14v28H5z" fill="#999" stroke="#777"/><path d="M14 20v18M22 24v14M36 20v18" stroke="#666" stroke-width="2"/><path d="M15 12 16 8h25l-1 4M28 4l2 4M19 14h14l-7 6M7 21h32M26 20q2 7-8 7" stroke="#e8707a" stroke-width="3.500"/></svg><select aria-label="切割方式"><option>顶部切割</option></select></div>
            </div>
            <div class="u-btns"><button type="button" class="b"><svg viewBox="0 0 20 20" class="i18"><path d="M3 3v14M17 3v14M1 14l2 3 2-3" stroke="#d22" stroke-width="2"/><circle cx="3" cy="3" r="2" fill="#d22" stroke="none"/><path d="M5 10h9m-3-3 3 3-3 3" stroke="#111" stroke-width="1.500"/></svg>曲线工具</button><button type="button" class="b"><svg viewBox="0 0 20 20" class="i18"><path fill="#f5434b" stroke="none" d="M4 4h12v12H4z"/></svg>一键展开</button></div>
            <div class="foot"></div>
          </form>
        </div>

        <div class="vscroll"><i class="up"></i><i class="thumb"></i><i class="down"></i></div>

        <div class="pagenav">
          <button aria-label="添加页"><svg class="i14"><use href="#page-add"/></svg></button>
          <button aria-label="首页"><svg viewBox="0 0 10 10"><path d="M2 1v8" stroke="#777"/><path d="M8 1v8L3 5z" fill="#777" stroke="none"/></svg></button>
          <button aria-label="上一页"><svg viewBox="0 0 10 10"><path d="M7 1v8L2 5z" fill="#777" stroke="none"/></svg></button>
          <span>1 / 1</span>
          <button aria-label="下一页"><svg viewBox="0 0 10 10"><path d="M3 1v8l5-4z" fill="#777" stroke="none"/></svg></button>
          <button aria-label="末页"><svg viewBox="0 0 10 10"><path d="M8 1v8" stroke="#777"/><path d="M2 1v8l5-4z" fill="#777" stroke="none"/></svg></button>
          <button aria-label="在后添加页"><svg class="i14"><use href="#page-add"/></svg></button>
          <button class="ptab">页 1</button>
          <div class="hscroll"><i class="left"></i><div class="track"><i class="thumb"></i></div><i class="right"></i></div>
        </div>
        <div class="zoomcorner"><svg viewBox="0 0 14 14" class="i14"><circle cx="6" cy="6" r="4.500"/><circle cx="6" cy="6" r="2"/><path d="m9 9 4 4" stroke-width="2"/></svg></div>

        <div class="docpal"><i class="play"></i><svg class="i14 ink"><use href="#dropper"/></svg><i class="lt"></i><button class="none" aria-label="无色"></button><button class="blk" aria-label="黑"></button><button class="blk" aria-label="深黑"></button><span class="more">›&nbsp;&nbsp;»</span></div>
      </main>

      <aside class="docker">
        <div class="dk-main">
          <div class="dk-head"><h2>对齐与分布</h2><svg viewBox="0 0 10 10"><path d="M0 1v8l4-4zM5 1v8l4-4z" fill="#aaa" stroke="none"/></svg><svg viewBox="0 0 10 10"><path d="m1 1 8 8M9 1 1 9" stroke="#aaa" stroke-width="2"/></svg></div>
          <div class="dk-top">
            <div class="dk-cols">
              <section class="al"><h3>对齐</h3><div class="cells">
                <button aria-label="左对齐"><svg viewBox="0 0 16 16"><path d="M1.500 1v14" stroke-dasharray="2 1"/><path d="M3 3h10v3H3zM3 9h7v3H3z"/></svg></button>
                <button aria-label="水平居中对齐"><svg viewBox="0 0 16 16"><path d="M8.500 0v16" stroke-dasharray="2 1"/><path d="M2 3h13v3H2zM4 9h9v4H4z"/></svg></button>
                <button aria-label="右对齐"><svg viewBox="0 0 16 16"><path d="M14.500 1v14" stroke-dasharray="2 1"/><path d="M2 3h11v3H2zM6 9h7v4H6z"/></svg></button>
                <button aria-label="顶端对齐"><svg viewBox="0 0 16 16"><path d="M1 1.500h14" stroke-dasharray="2 1"/><path d="M3 3h3v11H3zM10 3h3v8h-3z"/></svg></button>
                <button aria-label="垂直居中对齐"><svg viewBox="0 0 16 16"><path d="M0 8.500h16" stroke-dasharray="2 1"/><path d="M3 2h4v13H3zM10 5h4v7h-4z"/></svg></button>
                <button aria-label="底端对齐"><svg viewBox="0 0 16 16"><path d="M1 14.500h14" stroke-dasharray="2 1"/><path d="M3 2h3v11H3zM10 6h3v7h-3z"/></svg></button>
              </div></section>
              <section class="di"><h3>分布</h3><div class="cells four">
                <button aria-label="左分散"><svg viewBox="0 0 16 16"><path d="M1.500 1v14M11.500 1v6M3 3h7" stroke-dasharray="2 1"/><path d="M3 11h4v4H3zM12 6h4v3h-4z"/></svg></button>
                <button aria-label="水平分散居中"><svg viewBox="0 0 16 16"><path d="M4.500 1v14M12.500 1v14M5 3h7" stroke-dasharray="2 1"/><path d="M2 7h4v4H2zM10 10h4v4h-4z"/></svg></button>
                <button aria-label="右分散"><svg viewBox="0 0 16 16"><path d="M5.500 1v10M14.500 1v14M6 3h8" stroke-dasharray="2 1"/><path d="M1 11h4v4H1zM10 6h4v4h-4z"/></svg></button>
                <button aria-label="水平分散间距"><svg viewBox="0 0 16 16"><path d="M6.500 1v14M10.500 1v14M0 3h16" stroke-dasharray="2 1"/><path d="M2 8h4v4H2zM11 6h4v4h-4z"/></svg></button>
                <button aria-label="顶部分散"><svg viewBox="0 0 16 16"><path d="M1 1.500h14M1 9.500h10M13.500 1v9" stroke-dasharray="2 1"/><path d="M2 11h4v4H2zM6 3h4v4H6z"/></svg></button>
                <button aria-label="垂直分散居中"><svg viewBox="0 0 16 16"><path d="M1 4.500h14M1 12.500h14M13.500 4v9" stroke-dasharray="2 1"/><path d="M5 2h4v4H5zM3 10h4v4H3z"/></svg></button>
                <button aria-label="底部分散"><svg viewBox="0 0 16 16"><path d="M1 6.500h14M1 14.500h14M12.500 7v7" stroke-dasharray="2 1"/><path d="M2 1h4v4H2zM6 9h4v4H6z"/></svg></button>
                <button aria-label="垂直分散间距"><svg viewBox="0 0 16 16"><path d="M0 6.500h16M0 10.500h16M12.500 0v16" stroke-dasharray="2 1"/><path d="M5 2h4v4H5zM3 11h4v4H3z"/></svg></button>
              </div></section>
            </div>
            <div class="dk-text"><h3>文本</h3><div class="cells four">
              <button class="aabb" aria-label="首行基线">AA<br>BB</button><button class="aabb" aria-label="末行基线">AA<br>BB</button><button aria-label="边框" class="box"><b>A</b></button><button aria-label="轮廓"><svg viewBox="0 0 16 16"><path d="M1 7h14M8 1v12" stroke="#777"/><path d="M9 16v-5q0-2 2-2h5v4h-3v3z" fill="#1d2144" stroke="none"/></svg></button></div></div>
          </div>
          <div class="dk-low">
            <i class="fold"></i>
            <h3>对齐对象到:</h3>
            <div class="cells five">
              <button class="box" aria-label="活动对象"><svg viewBox="0 0 16 16"><path d="M1 4h10v11H1zM5 1h10v10H5zM4 7h5v5H4z" stroke="#555"/></svg></button>
              <button aria-label="页面边缘"><svg viewBox="0 0 16 16"><path d="M1 1h14v14H1z" fill="#e4e6f2" stroke="#667"/><path d="m8 1 2 3H6zM8 15l2-3H6zM1 8l3-2v4zM15 8l-3-2v4z" fill="#222" stroke="none"/></svg></button>
              <button aria-label="页面中心"><svg viewBox="0 0 16 16"><path d="M1 1h14v14H1z" fill="#e4e6f2" stroke="#667"/><path d="m8 4 2-3H6zM8 12l2 3H6zM4 8 1 6v4zM12 8l3-2v4z" fill="#222" stroke="none"/></svg></button>
              <button aria-label="网格"><svg viewBox="0 0 16 16"><path d="M1 1h14v14H1zM5.500 1v14M10.500 1v14M1 5.500h14M1 10.500h14" fill="#fff" stroke="#667"/></svg></button>
              <button aria-label="指定点"><svg viewBox="0 0 16 16"><path d="M1 1h14v14H1z" fill="#e4e6f2" stroke="#667"/><path d="M9 5h5M11.500 2.500v5" stroke="#222"/></svg></button>
            </div>
            <div class="xy"><label for="px">x:</label><span class="num-in"><input id="px" value="105.0 mm" disabled><i class="dn"></i><i class="upt"></i></span><label for="py">y:</label><span class="num-in"><input id="py" value="148.5 mm" disabled><i class="dn"></i><i class="upt"></i></span><span class="lock">◎</span></div>
            <hr>
            <h3>将对象分布到:</h3>
            <div class="cells five">
              <button class="box" aria-label="选定的范围"><svg viewBox="0 0 16 16"><path d="M1 2h14M1 14h14" stroke-dasharray="2 4" stroke="#222" stroke-width="2"/><path d="M3 8h10" stroke="#222" stroke-width="2"/><path d="M1 7v3M15 7v3"/></svg></button>
              <button aria-label="页面范围"><svg viewBox="0 0 16 16"><path d="M1 1h14v14H1z" fill="#d8dbea" stroke="#667"/><path d="M2 8h12" stroke="#223" stroke-width="2"/></svg></button>
            </div>
          </div>
        </div>
        <div class="dk-strip"><button class="dk-tab"><svg viewBox="0 0 16 16" class="i14"><path d="M2 1v14"/><path d="M3 3h11v4H3zM3 9h8v4H3z" fill="#ddd" stroke="#777"/></svg><span>对齐与分布</span></button><button class="off" aria-label="更多泊坞窗"><svg class="i18"><use href="#plus-circle"/></svg></button></div>
      </aside>
    </div>
  </div>

  <aside class="palette">
    <div class="pal-top"><i class="dots"></i><i class="play"></i><svg class="i14 pale"><use href="#dropper"/></svg><i class="chev up"></i></div>
    <ul>
      <li class="none"></li><li style="background:#231815"></li><li style="background:#3e3a39"></li><li style="background:#595757"></li><li style="background:#727171"></li><li style="background:#898989"></li><li style="background:#9fa0a0"></li><li style="background:#b5b5b6"></li><li style="background:#c9caca"></li><li style="background:#dcdddd"></li><li style="background:#efefef"></li><li style="background:#fff"></li><li style="background:#1d2088"></li><li style="background:#00a0e9"></li><li style="background:#009944"></li><li style="background:#fff100"></li><li style="background:#e60012"></li><li style="background:#e4007f"></li><li style="background:#b3478c"></li><li style="background:#f08300"></li><li style="background:#f5b0b5"></li><li style="background:#897468"></li><li style="background:#d2cce6"></li><li style="background:#a69fcb"></li><li style="background:#7390cb"></li><li style="background:#7a6bb3"></li><li style="background:#8f86b0"></li><li style="background:#50699a"></li><li style="background:#5f5371"></li><li style="background:#7389a5"></li><li style="background:#0091d9"></li><li class="sel" style="background:#9adcf7"></li><li style="background:#b8cdd8"></li><li style="background:#93a8b4"></li><li style="background:#6f8089"></li><li style="background:#495459"></li><li style="background:#4f7a70"></li><li style="background:#3e8d75"></li><li style="background:#6f9c97"></li><li style="background:#57ad9a"></li><li style="background:#50a06a"></li><li style="background:#5fb5cb"></li><li style="background:#4e9fb0"></li><li style="background:#b5c8b6"></li><li style="background:#d9efdf"></li><li style="background:#a4d6b0"></li><li style="background:#93a79d"></li>
    </ul>
    <i class="chev down"></i><span class="more">»</span>
    <i class="meter"></i>
  </aside>

  <div class="ime">
    <svg class="i26"><use href="#sogou"/></svg><b>中</b><b>°,</b>
    <svg viewBox="0 0 16 16"><circle cx="8" cy="8" r="7"/><path d="M5 5v2M11 5v2M4 9q4 5 8 0"/></svg>
    <svg viewBox="0 0 16 16"><rect x="5.500" y="1" width="5" height="9" rx="2.500" fill="#2772b8"/><path d="M3 7q0 6 5 6t5-6M8 13v3"/></svg>
    <svg viewBox="0 0 16 16"><rect x="1" y="2" width="14" height="12" rx="1"/><path d="M3 5h10M3 8h10M5 11h6" stroke-dasharray="2 1"/></svg>
    <svg viewBox="0 0 16 16" class="faint"><circle cx="7" cy="4" r="3" fill="#bcc5da"/><path d="M2 8h9v6H2zM9 10h6v5H9z" fill="#bcc5da"/></svg>
    <svg viewBox="0 0 16 16"><path d="m1 4 4-3q3 2 6 0l4 3-2 3-2-1v9H5V6L3 7z" fill="#2772b8"/></svg>
    <svg viewBox="0 0 16 16"><path d="M1 1h6v6H1zM1 9h6v6H1zM9 9h6v6H9z" fill="#2772b8" stroke="none"/><path d="M10 2h4v4h-4z"/></svg>
  </div>
</div>

<footer class="status">
  <span class="co">( -459.217, 2,450.856 )</span><button class="go" aria-label="详情"><i class="play"></i></button><span class="msg">曲线: 在 53 子路径上的 2 个节点</span>
  <div class="fillinfo"><svg viewBox="0 0 16 16" class="i16"><path d="M2 1h12v11H2z" fill="#dcd6e6" stroke="#546"/><circle cx="8" cy="6" r="3"/><path d="M4 14h8" stroke-width="2"/></svg><svg viewBox="0 0 16 16" class="i16"><path d="m2 10 6-7 6 7-6 5z" fill="#d98b3c" stroke="#754"/><path d="M4 8 8 3l4 5z" fill="#fff"/><path d="M8 1v4"/></svg><i class="none"></i><span>无</span></div>
  <div class="outinfo"><svg viewBox="0 0 16 16" class="i16"><path d="m8 1 3 6-2 6H7L5 7zM8 5v5M6 15h4"/></svg><i class="ink-sw"></i><span>C: 100 M: 100 Y: 0 K: 0 发丝</span></div>
</footer>

<div class="taskbar">
  <button class="ti" aria-label="开始"><svg viewBox="0 0 16 16" class="i16"><path d="m0 2 7-1v7H0zM8 1l8-1v8H8zM0 9h7v6l-7-1zM8 9h8v7l-8-1z" fill="#fff" stroke="none"/></svg></button>
  <button class="ti" aria-label="搜索"><svg viewBox="0 0 16 16" class="i16"><circle cx="10" cy="6" r="5" stroke="#fff"/><path d="m6 10-5 5" stroke="#fff" stroke-width="1.500"/></svg></button>
  <button class="ti e" aria-label="Edge"><svg viewBox="0 0 24 24" class="i24"><circle cx="12" cy="12" r="11.500" fill="#1877c9" stroke="none"/><path d="M1 10Q3 0 13 1q10 1 10 9-1 5-7 5-4-1-2-5-3-5-13 0z" fill="#40c4a0" stroke="none"/><path d="M9 10q-2 8 6 9 5 0 7-2-4 7-12 6Q0 20 1 11q3-4 8-1z" fill="#1155a8" stroke="none"/><path d="M14 10q-2 5 3 5-3 3-6 0-1-4 3-5z" fill="#202020" stroke="none"/></svg></button>
  <button class="task"><svg viewBox="0 0 20 20" class="i20"><path d="M3 1h10v16l-8 2-2-2z" fill="#f5c858" stroke="none"/><path d="m13 11 4 1v6l-12 1 8-3z" fill="#fde6a0" stroke="none"/></svg>迅捷屏幕录像工具</button>
  <button class="task"><svg viewBox="0 0 20 20" class="i20"><path d="M3 0h14v20H3z" fill="#345" stroke="none"/><path d="M6 1h8v5H6zM6 14h8v5H6z" fill="#5f8dd4" stroke="none"/><path d="M6 8h8v5H6z" fill="#b9a04f" stroke="none"/><path d="M4.500 0v20M15.500 0v20" stroke="#ccd" stroke-dasharray="1 2"/></svg>视频</button>
  <button class="ti s" aria-label="应用商店"><svg viewBox="0 0 24 24" class="i24"><path d="M1 7h22v16H1z" fill="#fff" stroke="none"/><path d="M7 8V2h10v6" stroke="#ddd" stroke-width="2"/><path d="M7 10h4v4H7z" fill="#f25022" stroke="none"/><path d="M13 10h4v4h-4z" fill="#7fba00" stroke="none"/><path d="M7 16h4v4H7z" fill="#00a4ef" stroke="none"/><path d="M13 16h4v4h-4z" fill="#ffb900" stroke="none"/></svg></button>
  <button class="ti s" aria-label="邮件"><svg viewBox="0 0 24 24" class="i24"><path d="m1 8 11-7 11 7v14H1z" fill="#1565b5" stroke="none"/><path d="M3 8h18l-9 9z" fill="#fff" stroke="none"/><path d="m1 8 11 9 11-9v14H1z" fill="#2a96e8" stroke="none"/></svg></button>
  <button class="ti s" aria-label="浏览器"><svg viewBox="0 0 24 24" class="i24"><circle cx="12" cy="12" r="11" fill="#4aa3ea" stroke="none"/><path d="M6 12h12q0-6-6-6t-6 6 6 6q4 0 5-3" stroke="#fff" stroke-width="3"/></svg></button>
  <button class="task active"><svg class="i24"><use href="#corel"/></svg>CorelDRAW X7 (6...</button>
  <button class="task"><svg class="i24"><use href="#rec"/></svg>迅捷屏幕录像工具</button>
  <div class="tray">
    <span>桌面</span><sup>»</sup>
    <svg viewBox="0 0 22 22" class="sun"><circle cx="11" cy="11" r="7" fill="#fbb829" stroke="none"/><circle cx="11" cy="11" r="10" stroke="#fbb829" stroke-width="2" stroke-dasharray="1 7"/></svg><span class="temp">7°C</span>
    <svg viewBox="0 0 16 16"><path d="m3 11 5-5 5 5" stroke="#fff" stroke-width="1.500"/></svg>
    <svg><use href="#rec"/></svg>
    <svg viewBox="0 0 16 16"><rect x="5" y="0" width="6" height="11" rx="3" fill="#fff" stroke="none"/><path d="M3 8q0 5 5 5t5-5M8 13v3" stroke="#fff"/></svg>
    <svg viewBox="0 0 20 20"><use href="#penguin"/><path d="M5 9q5 3 10 0M7 9v5" stroke="#e02020" stroke-width="2.500"/><path d="M4 18h5M11 18h5" stroke="#f0a020" stroke-width="2"/></svg>
    <svg><use href="#penguin"/></svg>
    <svg viewBox="0 0 16 16"><path d="M4 3h11v8H4zM1 1h4v5H1M3 6v7h4M7 14h7M10 11v3" stroke="#fff"/></svg>
    <svg viewBox="0 0 16 16"><path d="M1 6h2l4-4v12l-4-4H1zM9 5q2 3 0 6M11 3q4 5 0 10M13 1q6 7 0 14" stroke="#fff"/></svg>
    <span class="zh">中</span>
    <svg class="sg"><use href="#sogou"/></svg>
    <time>21:32<br>2021/11/12</time>
  </div>
</div>
</body>
</html>
```
FILE: styles.css
```css
* { box-sizing: border-box; }
body {
  margin: 0;
  height: 100vh;
  display: flex;
  flex-direction: column;
  overflow: hidden;
  background: #f4f4f4;
  color: #111;
  font: 13px/18px "Noto Sans", "Noto Sans CJK SC", sans-serif;
}
button, input, select { font: inherit; color: inherit; margin: 0; padding: 0; border: 0; background: none; border-radius: 0; }
button { white-space: nowrap; }
h1, h2, h3 { margin: 0; font-size: 13px; font-weight: 400; line-height: 18px; }
svg { display: block; fill: none; stroke: #555; flex: none; overflow: visible; }
svg text { stroke: none; fill: #333; }
.sprite { width: 0; height: 0; position: absolute; }
.i14 { width: 14px; height: 14px; }
.i16 { width: 16px; height: 16px; }
.i18 { width: 18px; height: 18px; }
.i20 { width: 20px; height: 20px; }
.i24 { width: 24px; height: 24px; }
.i26 { width: 26px; height: 26px; }
i { display: block; flex: none; }

select {
  appearance: none;
  background: #fff url("data:image/svg+xml,%3Csvg xmlns='http://www.w3.org/2000/svg' width='10' height='10'%3E%3Cpath d='m1 3 4 4 4-4' fill='none' stroke='%23555'/%3E%3C/svg%3E") no-repeat right 4px center;
  border: 1px solid #888;
  padding: 0 3px;
}

/* title and menus */
.titlebar { display: flex; align-items: center; height: 21px; flex: none; background: #fff; padding: 0 8px 0 2px; gap: 3px; font-family: Roboto, "Noto Sans CJK SC", sans-serif; }
.titlebar .i20 { width: 18px; height: 17px; }
.titlebar h1 { padding-left: 1px; }
.winctl { margin-left: auto; display: flex; gap: 13px; }
.winctl button:first-child { margin-right: 8px; }
.menubar { display: flex; height: 21px; flex: none; background: #d9d9d9; padding-left: 8px; font-family: Roboto, "Noto Sans CJK SC", sans-serif; }
.menubar a { color: #111; text-decoration: none; width: 59px; line-height: 20px; }
.menubar a:nth-child(11) { width: 63px; }

/* toolbars */
.bar { display: flex; align-items: center; flex: none; border-bottom: 1px solid #d6d6d6; }
.bar-std { height: 30px; }
.bar-prop { height: 41px; padding-left: 3px; }
.bar-plug { height: 30px; }
.tb { width: 28px; height: 28px; flex: none; display: flex; align-items: center; justify-content: center; }
.tb svg { width: 18px; height: 18px; }
.tb.on { width: 22px; height: 22px; margin: 0 3px; background: #fff; outline: 1px solid #999; }
.off svg { stroke: #bbb; }
.tb.wide { width: 40px; }
.tb.narrow { width: 22px; }
.sep { width: 1px; height: 22px; margin: 0 4px 0 3px; background: #d4d4d4; }
.bar-prop .sep { height: 32px; }
.caret { width: 15px; height: 4px; border: 0; }
.caret::after { content: ""; display: block; width: 0; margin-left: 1px; border: 4px solid transparent; border-top-color: #111; }
.caret.dim::after { border-top-color: #bbb; }
.zoomlevel { padding: 0 3px 0 11px; }
.zoomlevel select { width: 83px; height: 22px; padding: 0 4px; }
.shape select { width: 98px; height: 23px; background-color: #e1e1e1; border-color: #aaa; }
.textbtn { padding: 0 4px 0 6px; }
.dimtext { color: #aaa; padding: 0 8px 0 11px; }
.smooth { display: flex; align-items: center; width: 44px; height: 23px; border: 1px solid #bbb; margin-right: 3px; }
.smooth input { width: 26px; padding-left: 4px; color: #999; }
.smooth svg { width: 12px; height: 12px; stroke: #999; }
.tiny { font: 700 6px "Liberation Sans", sans-serif; fill: #fff; }
.fly { position: relative; }
.fly::after { content: ""; position: absolute; right: 4px; bottom: 4px; border: 3px solid #000; border-top-color: transparent; border-left-color: transparent; }
.fly.on::after { right: 1px; bottom: 1px; }
.glyph { font-size: 16px; font-weight: 700; }
.glyph.grey { color: #555; }
.num b { width: 17px; height: 18px; background: #1a86e8; color: #fff; font: 700 15px/18px "DejaVu Sans", sans-serif; text-align: center; }
.rbadge { width: 16px; height: 16px; border-radius: 2px; background: #f0a01e; color: #fff; font: 700 12px/16px "Liberation Sans", sans-serif; text-align: center; }

/* workspace */
.workspace { position: relative; flex: 1; display: flex; min-height: 0; border-bottom: 1px solid #cfcfcf; }
.toolbox { width: 29px; flex: none; border-right: 1px solid #d0d0d0; }
.toolbox .tb.on { margin: 3px; }
.toolbox .tb svg { width: 18px; height: 18px; }
.hsep { height: 1px; margin: 4px 3px 3px 4px; background: #d4d4d4; }
.toolbox .grow { height: 40px; }
.center { flex: 1; display: flex; flex-direction: column; min-width: 0; }
.split { flex: 1; display: flex; min-height: 0; }
.doc {
  flex: 1;
  min-width: 0;
  display: grid;
  grid-template: 20px 18px 1fr 18px 20px / 20px 1fr 17px;
}
.tabs { grid-column: 1 / -1; display: flex; background: #e8e8e8; border-bottom: 1px solid #3f9cb8; }
.tabs button { height: 19px; width: 76px; padding-left: 4px; text-align: left; background: #d8d8d8; }
.tabs .cur { background: #cce4ff; }
.tabs .add { width: 23px; padding: 0; text-align: center; color: #999; font-size: 18px; background: #dcdcdc; }
.corner svg { width: 18px; height: 18px; }
.hruler { grid-column: 2 / -1; width: 100%; height: 18px; border-bottom: 1px solid #888; overflow: hidden; }
.vruler { grid-row: 3 / 5; width: 20px; height: 100%; border-right: 1px solid #888; overflow: hidden; }
.rl text { font-size: 10px; fill: #888; text-anchor: middle; }
.canvas { position: relative; overflow: hidden; background: #fff; border-bottom: 1px solid #888; }
.drawing { position: absolute; inset: 0; width: 100%; height: 100%; }
.nodes { fill: #fff; stroke: #3f74c8; }
.vscroll { display: flex; flex-direction: column; align-items: center; background: #fff; border-bottom: 1px solid #888; }
.vscroll .thumb { width: 15px; height: 88px; margin-top: 363px; background: #cdcdcd; }
.up, .down, .left, .right, .lt, .chev { width: 6px; height: 6px; border: solid #444; border-width: 2px 0 0 2px; }
.vscroll .up { margin-top: 9px; transform: rotate(45deg); }
.down { transform: rotate(225deg); }
.vscroll .down { margin: auto 0 7px; }
.left, .lt { transform: rotate(-45deg); }
.right { transform: rotate(135deg); }
.pagenav { display: flex; align-items: center; border-bottom: 1px solid #d0d0d0; }
.pagenav svg:not(.i14) { width: 10px; height: 10px; }
.pagenav > button { width: 18px; display: flex; justify-content: center; }
.pagenav > button:first-child { width: 15px; }
.pagenav span { width: 58px; text-align: center; }
.pagenav .ptab { width: 49px; height: 17px; line-height: 17px; background: #fff; border: 1px solid #aaa; border-top: 0; border-radius: 0 0 8px 0; }
.hscroll { flex: 1; display: flex; align-items: center; height: 17px; margin-left: 574px; border-left: 1px solid #999; padding: 0 8px; gap: 5px; }
.track { flex: 1; height: 15px; }
.track .thumb { width: 30%; height: 15px; background: #cdcdcd; }
.zoomcorner { display: grid; place-items: center; }
.docpal { grid-column: 1 / -1; display: flex; align-items: center; padding-left: 14px; }
.play { width: 0; border: 4px solid transparent; border-left: 6px solid #000; border-right: 0; }
.docpal .i14 { margin: 0 5px 0 4px; }
.lt { border-color: #ccc; margin-right: 6px; }
.none { background: #fff linear-gradient(to top right, transparent 47%, #222 47%, #222 53%, transparent 53%); position: relative; border: 1px solid #333; }
.none::after { content: ""; position: absolute; inset: 0; background: linear-gradient(to bottom right, transparent 47%, #222 47%, #222 53%, transparent 53%); }
.docpal button { width: 17px; height: 17px; }
.blk { background: #231815; border: 1px solid #444; }
.more { color: #aaa; font-size: 16px; }
.docpal .more { margin-left: auto; padding-right: 12px; }

/* dialogs */
.dlg { position: absolute; background: #f0f0f0; border: 1px solid #a8a8a8; box-shadow: 2px 3px 10px rgba(0, 0, 0, .35); font-size: 12px; line-height: 16px; display: flex; flex-direction: column; }
.carve { left: 16px; top: 21px; width: 453px; }
.unfold { right: 11px; top: 26px; width: 233px; }
.dlg-title { display: flex; align-items: center; gap: 4px; height: 30px; background: #fff; padding: 0 10px 0 7px; color: #999; }
.dlg-title button { margin-left: auto; }
.dlg-title button svg { width: 11px; height: 11px; }
.r { display: flex; align-items: center; white-space: nowrap; }
.red { color: #e01c24; }
.navy { color: #1a1a90; }
.b { display: flex; align-items: center; justify-content: center; gap: 5px; height: 31px; background: #e1e1e1; border: 1px solid #adadad; }
.w73 { width: 73px; }
.w79 { width: 79px; }
.w86 { width: 86px; }
.dlg input[type=checkbox], .dlg input[type=radio] {
  appearance: none; flex: none; width: 13px; height: 13px; border: 1px solid #333; background: #fff;
}
.dlg input[type=radio] { border-radius: 50%; }
.dlg input[type=radio]:checked { background: radial-gradient(circle, #222 3px, #fff 4px); }
.dlg input[type=checkbox]:checked { position: relative; }
.dlg input[type=checkbox]:checked::after { content: ""; position: absolute; left: 3px; top: 0; width: 4px; height: 8px; border: solid #222; border-width: 0 1px 1px 0; transform: rotate(40deg); }
.dlg label { display: flex; align-items: center; gap: 3px; white-space: nowrap; }
.val { width: 49px; height: 21px; background: #fff; border: 1px solid #777; text-align: center; color: #8c1c1c; font: 700 14px "Liberation Serif", serif; }
.val.black { color: #111; }
.s1 { display: flex; gap: 20px; padding: 10px 0 12px 22px; align-items: center; }
.s1 .b { height: 37px; }
.kn { width: 117px; }
.kn .r { gap: 4px; padding-left: 3px; height: 20px; }
.kn select { width: 53px; height: 20px; flex: none; color: #8c1c1c; font: 700 12px "Liberation Mono", monospace; background-position: right 3px center; }
.kn .r.radios { padding: 0; margin-top: 3px; gap: 3px; }
.s2 { border-top: 1px solid #d0d0d0; padding: 8px 12px 5px 10px; box-shadow: inset 0 7px 0 #f7f7f7; }
.plt { padding-left: 12px; gap: 8px; }
.plt .b { height: 38px; }
.plt .ck { margin-right: 6px; }
.b.focus { border: 2px solid #1f78c8; }
.s2 hr { width: 403px; margin: 8px 0 9px 12px; border: 0; border-top: 1px solid #888; }
.params { display: flex; gap: 11px; }
.col { display: flex; flex-direction: column; gap: 8px; }
.col .r, .col > .ck { height: 21px; }
.col .r { gap: 2px; }
.path { width: 132px; height: 20px; background: #fff; border: 1px solid #777; }
.minus { width: 20px; height: 19px; }
.minus svg { width: 14px; height: 4px; }
.bigs { display: grid; grid-template-columns: 106px 48px 48px; gap: 8px; }
.bigs .b { height: 47px; }
.bigs svg { width: 28px; height: 32px; }
.bigs .spindle { height: 43px; width: 30px; }
.s3 { border-top: 1px solid #a8a8a8; padding: 17px 8px 4px 7px; box-shadow: inset 0 10px 0 #e6e6e6; }
.btn5 { display: grid; grid-template-columns: repeat(5, 79px); justify-content: space-between; row-gap: 9px; }
.s3 .b { width: 79px; gap: 4px; }
.line3 { margin-top: 4px; justify-content: space-between; }
.eq { width: 59px; height: 22px; margin-left: 3px; }
.spin { display: flex; width: 64px; height: 21px; background: #fff; border: 1px solid #777; align-items: center; justify-content: space-between; }
.spin input { width: 40px; padding-left: 3px; }
.spin i { width: 13px; height: 15px; margin-right: 3px; background: linear-gradient(#ccc, #ccc) center / 100% 1px no-repeat #e8e8e8; position: relative; }
.spin i::before, .spin i::after { content: ""; position: absolute; left: 3px; border: 4px solid transparent; }
.spin i::before { bottom: 9px; border-bottom-color: #111; }
.spin i::after { top: 9px; border-top-color: #111; }
.line4 { margin-top: 7px; }
.line4 .val { margin: 0 19px 0 20px; }
.line4 .ck { margin-right: 22px; }
.line4 .b { margin-left: auto; }
.foot { height: 9px; border-top: 1px solid #d8d8d8; background: #ebebeb; }

.u-body { padding: 16px 23px 7px 24px; border-bottom: 1px solid #d0d0d0; display: flex; flex-direction: column; font-size: 13px; }
.u-body .modes { padding-left: 4px; height: 16px; justify-content: space-between; padding-right: 22px; }
.hrow { justify-content: space-between; height: 38px; font-weight: 700; font-size: 12px; }
.hrow.third { height: 36px; }
.hrow svg { width: 54px; height: 24px; }
.hrow label { width: 54px; }
.hrow input { width: 65px; height: 25px; background: #050505; border: 1px solid #777; outline: 1px solid #fff; outline-offset: -2px; color: #fff; text-align: center; font-weight: 700; }
.hrow input:disabled { color: #666; }
.maroon { color: #7c1418; }
.blue { color: #1a1ed0; }
.ang { font-size: 13px; font-weight: 400; }
.mark { height: 28px; padding-left: 9px; justify-content: space-between; font-size: 12px; }
.offspin { width: 46px; height: 24px; background: #f0f0f0; border-color: #ccc; color: #999; }
.offspin input { width: 24px; padding-left: 8px; }
.spin.offspin i::before { border-bottom-color: #888; }
.spin.offspin i::after { border-top-color: #888; }
.sw { width: 16px; height: 16px; background: #e23224; border: 1px solid #222; }
.small { height: 24px; padding-left: 9px; justify-content: space-between; font-size: 12px; font-weight: 700; }
.small select { width: 60px; height: 19px; color: #e01c24; }
.conv { height: 30px; padding-left: 9px; font-size: 12px; }
.cutrow { justify-content: space-between; height: 44px; font-size: 12px; }
.cutrow svg { width: 52px; height: 42px; }
.cutrow select { width: 110px; height: 25px; background-color: #e1e1e1; border-color: #adadad; }
.u-btns { display: flex; justify-content: space-between; padding: 8px 8px 11px; font-size: 13px; }
.u-btns .b { width: 96px; height: 35px; gap: 8px; }

/* docker */
.docker { width: 277px; flex: none; display: flex; border-left: 2px solid #fff; outline: 1px solid #ddd; }
.dk-main { flex: 1; min-width: 0; background: #f4f4f4; }
.dk-head { display: flex; align-items: center; gap: 12px; height: 20px; margin-right: -20px; padding: 0 7px 0 4px; background: #e8e8e8; border-bottom: 1px solid #aaa; position: relative; z-index: 1; }
.dk-head h2 { flex: 1; }
.dk-head svg { width: 8px; height: 8px; }
.dk-main h3 { padding-left: 5px; }
.dk-top { background: #f8f8f8; height: 118px; padding-top: 3px; }
.dk-cols { display: flex; margin-right: 3px; height: 79px; border-bottom: 1px solid #ddd; }
.al { width: 107px; border-right: 1px solid #ddd; height: 72px; flex: none; }
.di { flex: 1; }
.cells { display: grid; grid-template-columns: repeat(3, 35px); }
.cells.four { grid-template-columns: 35px 35px 35px 38px; }
.cells.four button:nth-child(4n) { padding-left: 4px; }
.cells.five { grid-template-columns: repeat(5, 37px); }
.cells button { height: 28px; display: grid; place-items: center; }
.cells svg { width: 16px; height: 16px; }
.cells .box { width: 22px; height: 22px; background: #fff; border: 1px solid #aaa; margin: 3px 6px; align-self: center; }
.cells .aabb { align-content: center; font: 700 9px/8px "Liberation Sans", sans-serif; }
.dk-text { display: flex; align-items: center; justify-content: space-between; height: 36px; margin-right: 4px; color: #aaa; }
.dk-text .cells { width: 143px; }
.dk-low { background: #e8e8e8; height: 164px; padding-top: 5px; }
.fold { width: 0; margin-left: 122px; border: 4px solid transparent; border-bottom-color: #000; border-top: 0; }
.dk-low h3 { margin-top: 8px; }
.dk-low .cells { margin-top: 1px; }
.xy { display: grid; grid-template-columns: 53px 152px 34px; column-gap: 5px; margin-top: 3px; color: #999; line-height: 16px; }
.xy label { text-align: right; }
.num-in { display: flex; align-items: center; gap: 4px; height: 16px; border: 1px solid #ccc; padding: 0 3px; background: #f0f0f0; }
.num-in input { flex: 1; min-width: 0; font-size: 12px; line-height: 14px; }
.dn, .upt { width: 0; border: 3px solid transparent; }
.dn { border-top-color: #555; border-bottom: 0; }
.upt { border-bottom-color: #555; border-top: 0; }
.xy .lock { grid-column: 3; grid-row: 1 / 3; align-self: center; text-align: center; color: #bbb; font-size: 10px; }
.dk-low hr { margin: 5px 6px 0; border: 0; border-top: 1px solid #ccc; }
.dk-low hr + h3 { margin-top: 5px; }
.dk-strip { width: 21px; flex: none; padding-top: 20px; background: #e9e9e9; border-left: 1px solid #bbb; display: flex; flex-direction: column; align-items: center; gap: 17px; }
.dk-tab { width: 20px; height: 107px; background: #afafaf; display: flex; flex-direction: column; align-items: center; padding-top: 4px; gap: 6px; }
.dk-tab span { writing-mode: vertical-rl; }

/* colour palette */
.palette { position: relative; width: 18px; flex: none; border-left: 1px solid #ccc; text-align: center; display: flex; flex-direction: column; align-items: center; }
.pal-top { height: 54px; flex: none; display: flex; flex-direction: column; align-items: center; gap: 4px; padding-top: 5px; }
.dots { width: 11px; border-top: 2px dotted #bbb; }
.pale { stroke: #ccc; }
.ink { stroke: #333; }
.chev { border-color: #bbb; }
.chev.up { transform: rotate(45deg); }
.palette ul { list-style: none; margin: 0; padding: 0; width: 17px; }
.palette li { height: 17px; border: solid #555; border-width: 0 1px 1px; }
.palette li.none { border: 1px solid #333; }
.palette li.sel { border: 1px solid #333; outline: 1px solid #fff; outline-offset: -2px; }
.chev.down { margin: 4px 0; }
.meter { position: absolute; right: 4px; top: 737px; width: 8px; height: 65px; border: 1px solid #234; border-radius: 4px; background: linear-gradient(#27405e 50%, #5df09a 50%, #3ce8d0); }

.ime { position: absolute; right: 23px; bottom: 23px; width: 204px; height: 26px; display: flex; align-items: center; justify-content: space-between; padding-right: 4px; background: linear-gradient(to right, transparent 14px, #fff 14px); border: solid #bbb; border-width: 0 1px 1px 0; color: #2772b8; }
.ime svg { width: 16px; height: 16px; stroke: #2772b8; stroke-width: 1.5; }
.ime .i26 { width: 26px; height: 27px; }
.ime .faint { stroke: #bcc5da; }
.ime b { font-size: 14px; }

/* status */
.status { display: flex; align-items: center; height: 32px; flex: none; padding-left: 5px; font-size: 12px; white-space: nowrap; }
.co { width: 121px; }
.go { width: 14px; height: 14px; border: 1px solid #111; display: grid; place-items: center; }
.msg { padding-left: 18px; }
.fillinfo { margin-left: auto; width: 233px; display: flex; align-items: center; gap: 10px; }
.fillinfo .none, .ink-sw { width: 18px; height: 17px; }
.fillinfo svg + svg { margin-left: 4px; }
.fillinfo .none { margin-left: -4px; }
.fillinfo span { margin-left: -8px; }
.outinfo { width: 222px; display: flex; align-items: center; gap: 4px; padding-left: 5px; border-left: 1px solid #ccc; }
.ink-sw { background: #1d2088; }

/* taskbar */
.taskbar { display: flex; align-items: center; height: 40px; flex: none; background: #1f1f1f; color: #fff; font-size: 12px; }
.ti { width: 48px; height: 40px; display: grid; place-items: center; }
.ti.e { width: 56px; padding-right: 4px; }
.ti.s { width: 49px; }
.task { width: 152px; height: 40px; margin-right: 8px; padding-left: 6px; display: flex; align-items: center; gap: 7px; border-bottom: 2px solid #6fa7d0; color: #fff; }
.task + .ti.s { margin-left: -4px; }
.task.active { width: 160px; margin-right: 5px; padding-left: 8px; background: #4b4b4b; }
.ti.s + .task.active { margin-left: 1px; }
.tray { margin-left: auto; display: flex; align-items: center; gap: 8px; padding-right: 8px; }
.tray svg { width: 16px; height: 16px; }
.tray sup { margin: -14px 0 0 3px; font-size: 15px; line-height: 14px; }
.tray .sun { width: 20px; height: 20px; margin-left: 13px; }
.temp { font-size: 15px; margin: 0 21px 0 2px; }
.zh { font-size: 13px; margin: 0 1px; }
.tray .sg { margin: 0 6px; }
time { text-align: center; line-height: 19px; }
```
